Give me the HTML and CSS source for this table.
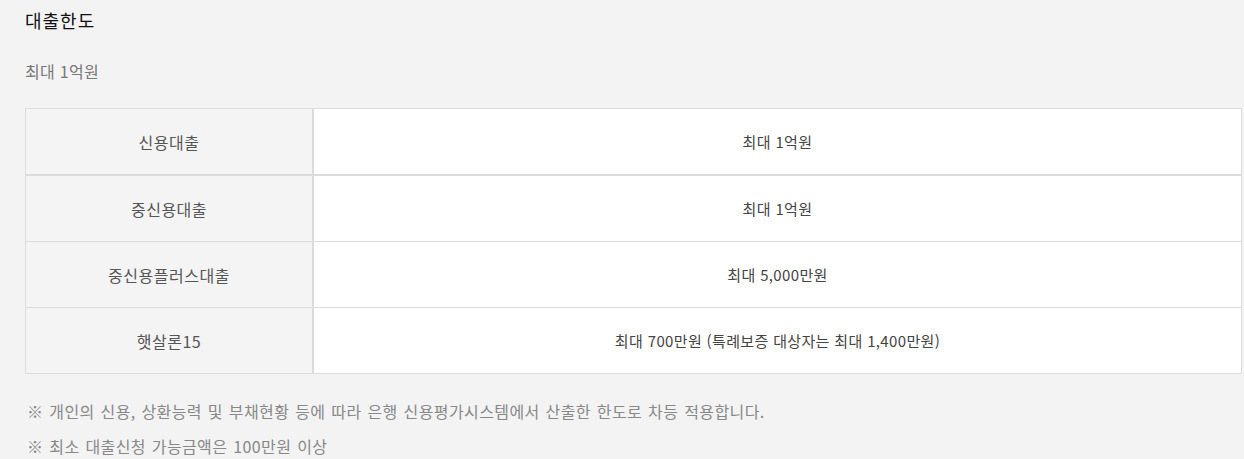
FILE: index.html
```html
<!DOCTYPE html>
<html lang="ko">
<head>
<meta charset="utf-8">
<link rel="stylesheet" href="styles.css">
</head>
<body>
<div class="page">
  <h2 class="title">대출한도</h2>
  <p class="summary">최대 1억원</p>
  <table class="limits">
    <tbody>
      <tr class="first"><th>신용대출</th><td>최대 1억원</td></tr>
      <tr><th>중신용대출</th><td>최대 1억원</td></tr>
      <tr><th>중신용플러스대출</th><td>최대 5,000만원</td></tr>
      <tr><th>햇살론15</th><td>최대 700만원 (특례보증 대상자는 최대 1,400만원)</td></tr>
    </tbody>
  </table>
  <ul class="notes">
    <li>※ 개인의 신용, 상환능력 및 부채현황 등에 따라 은행 신용평가시스템에서 산출한 한도로 차등 적용합니다.</li>
    <li>※ 최소 대출신청 가능금액은 100만원 이상</li>
  </ul>
</div>
</body>
</html>
```

FILE: styles.css
```css
html, body {
  margin: 0;
  padding: 0;
  background: #f3f3f3;
}
body {
  font-family: "Noto Sans CJK KR", "Noto Sans", sans-serif;
}
.page {
  padding: 7px 2px 0 25px;
}
.title {
  margin: 0;
  font-size: 18px;
  line-height: 26px;
  font-weight: 400;
  letter-spacing: 1px;
  color: #111;
}
.summary {
  margin: 27px 0 0;
  font-size: 16px;
  line-height: 22px;
  letter-spacing: 0.3px;
  color: #777;
}
.limits {
  margin-top: 26px;
  width: 100%;
  border-collapse: collapse;
  border: 1px solid #dcdcdc;
}
.limits th,
.limits td {
  height: 65px;
  padding: 0;
  text-align: center;
  font-weight: 400;
  border-top: 1px solid #dcdcdc;
}
.limits tr:nth-child(2) th,
.limits tr:nth-child(2) td {
  border-top: 2px solid #dcdcdc;
}
.limits th {
  width: 286px;
  background: #f4f4f4;
  color: #555;
  font-size: 16px;
  letter-spacing: 0.5px;
  border-right: 2px solid #dcdcdc;
}
.limits td {
  background: #fff;
  color: #444;
  font-size: 15px;
  letter-spacing: 0.35px;
}
.notes {
  list-style: none;
  margin: 26px 0 0;
  padding: 0 0 0 2px;
  font-size: 16px;
  line-height: 22px;
  letter-spacing: 0.4px;
  word-spacing: 1px;
  color: #888;
}
.notes li + li {
  margin-top: 13px;
}
```
